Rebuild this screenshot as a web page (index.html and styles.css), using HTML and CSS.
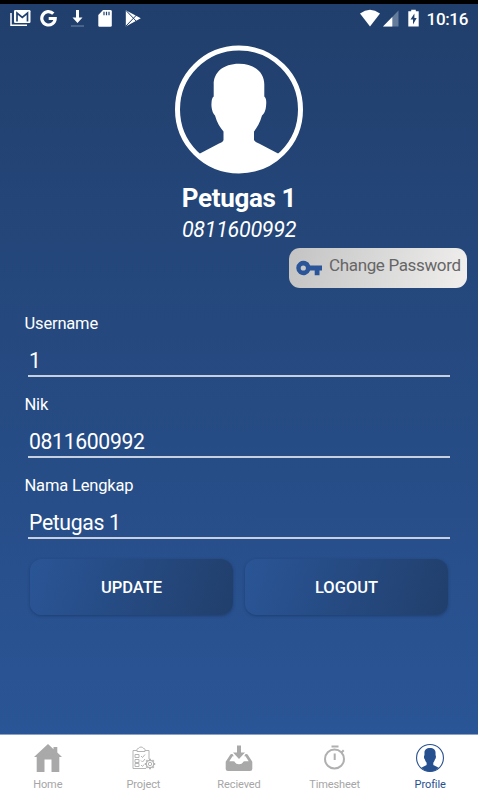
FILE: index.html
```html
<!DOCTYPE html>
<html lang="id">
<head>
<meta charset="utf-8">
<title>Profile</title>
<link rel="stylesheet" href="styles.css">
</head>
<body>
<svg width="0" height="0" class="defs">
  <symbol id="person" viewBox="0 0 128 128">
    <path d="M64 18.300C80 18.300 89.300 27 89.300 39V51Q92 53 91 61Q90.500 67 87 70C85 77 82 82 79 86V94.500Q80 96.500 84 98L104 108.500C94 119 80 126 64 126S34 119 24 108.500L44 98Q48 96.500 48.500 94.500V86C45 82 42 77 40 70Q37 67 36.500 61Q36 53 38.700 51V39C38.700 27 48 18.300 64 18.300Z" fill="currentColor"/>
  </symbol>
</svg>
<div class="screen">
  <header class="status">
    <div class="status-left">
      <svg width="21" height="18" viewBox="0 0 21 18"><path d="M1 4V16.300H17" fill="none" stroke="#fff" stroke-width="1.500"/><rect x="4" y="1" width="16.500" height="13" rx="1.200" fill="#fff"/><path d="M7 12.500V4L12.300 8.500L17.500 4V12.500" fill="none" stroke="#21406e" stroke-width="1.700"/></svg>
      <svg width="17" height="18" viewBox="0 0 17 18"><path d="M13.300 4.600A6.700 6.700 0 1 0 15.200 9.500H8.700" fill="none" stroke="#fff" stroke-width="3.200"/></svg>
      <svg width="14" height="18" viewBox="0 0 14 18"><path d="M5 1H8V8.500H11.500L6.500 14L1.500 8.500H5Z" fill="#fff"/><path d="M0 17H13" stroke="#7188a8" stroke-width="1"/></svg>
      <svg width="14" height="18" viewBox="0 0 14 18"><path d="M5 1H12.300Q13.800 1 13.800 2.200V16.300Q13.800 17.800 12.300 17.800H1.500Q.3 17.800 .3 16.300V6Z" fill="#fff"/><path d="M6 2.800V6.300M8.500 2.800V6.300M11 2.800V6.300" stroke="#21406e" stroke-width="1.200"/></svg>
      <svg width="16" height="18" viewBox="0 0 16 18"><path d="M.8 1.200L15.800 9.300L.8 17.500Z" fill="#fff"/><path d="M1 1.500L12.500 13.500M1 17L12.500 5" stroke="#21406e" stroke-width="1"/></svg>
    </div>
    <div class="status-right">
      <svg width="21" height="18" viewBox="0 0 21 18"><path d="M0 4.500Q10-2.800 20 4.500L10 17.500Z" fill="#fff"/></svg>
      <svg class="signal" width="16" height="18" viewBox="0 0 16 18"><path d="M0 17.500L15.500 1.500V17.500Z" fill="#647b9c"/><path d="M0 17.500L9.300 7.900V17.500Z" fill="#fff"/></svg>
      <svg class="battery" width="11" height="18" viewBox="0 0 11 18"><path d="M3.200.8H7.800V2.300H10.700V17.600H.3V2.300H3.200Z" fill="#fff"/><path d="M6.400 4.500L2.500 10.500H5V15.500L8.700 9H6.400Z" fill="#21406e"/></svg>
      <span class="clock">10:16</span>
    </div>
  </header>
  <main>
    <section class="identity">
      <svg class="avatar" width="128" height="129" viewBox="0 0 128 128"><circle cx="64" cy="64" r="61.500" fill="none" stroke="currentColor" stroke-width="5"/><use href="#person"/></svg>
      <h1>Petugas 1</h1>
      <p>0811600992</p>
    </section>
    <button class="password">
      <svg width="26" height="16" viewBox="0 0 26 16"><path fill-rule="evenodd" d="M14.200 5.500H26V10.500H23.500V15.300H18.700V10.500H14.200A7.200 7.200 0 1 1 14.200 5.500ZM7.300 5.400A2.600 2.600 0 1 0 7.300 10.600A2.600 2.600 0 1 0 7.300 5.400Z" fill="#2a5598"/></svg>
      <span>Change Password</span>
    </button>
    <form>
      <div class="field"><label>Username</label><div class="value">1</div></div>
      <div class="field"><label>Nik</label><div class="value">0811600992</div></div>
      <div class="field"><label>Nama Lengkap</label><div class="value">Petugas 1</div></div>
      <div class="actions"><button type="button">UPDATE</button><button type="button">LOGOUT</button></div>
    </form>
  </main>
  <nav>
    <a><svg width="28" height="28" viewBox="0 0 28 28"><path d="M14 0L19.500 5.200V3H23.300V8.600L28 13H25.300V28H17.500V15.500H10.500V28H2.700V13H0Z" fill="#a9a9a9"/></svg><span>Home</span></a>
    <a><svg width="28" height="28" viewBox="0 0 28 28" fill="none" stroke="#b5b5b5" stroke-width="1"><path d="M8 6.500H4V24.500H17M16 6.500H20V15"/><path d="M8 7.500V5.500Q8 4.500 9.500 4.500Q10 3 12 3T14.500 4.500Q16 4.500 16 5.500V7.500Z"/><path d="M6 10.500H10V13.500H6ZM6 15.500H10V18.500H6ZM6 19.500H10V22.500H6ZM12 12L13.500 13.500L16 10.500M12 16.500L13.500 18L16 15M12 21L13.500 22.500L15 20.500"/><circle cx="21" cy="20" r="3.700" stroke-width="1.300"/><circle cx="21" cy="20" r="1.700"/><path d="M21 14.800V16.200M21 23.800V25.200M15.800 20H17.200M24.800 20H26.200M17.300 16.300L18.300 17.300M23.700 22.700L24.700 23.700M17.300 23.700L18.300 22.700M23.700 17.300L24.700 16.300" stroke-width="2"/></svg><span>Project</span></a>
    <a><svg width="28" height="28" viewBox="0 0 28 28" fill="#a9a9a9"><path d="M12 1.500H16V8.500H20L14 15L8 8.500H12Z"/><path d="M7.500 10L8.800 12.200H7.500L4.300 17.300H8.500Q9.500 17.300 10 18.300Q10.800 20.300 14 20.300T18 18.300Q18.500 17.300 19.500 17.300H23.700L20.500 12.200H19.200L20.500 10H21.500Q22.300 10 22.800 10.800L26.500 16.500Q27.300 17.300 27.300 18.300V25Q27.300 27 25 27H3Q.7 27 .7 25V18.300Q.7 17.300 1.500 16.500L5.200 10.800Q5.700 10 6.500 10Z"/></svg><span>Recieved</span></a>
    <a><svg width="28" height="28" viewBox="0 0 28 28" fill="none" stroke="#b0b0b0" stroke-width="2"><circle cx="13.500" cy="15" r="9.500"/><path d="M10.500 2.500H17.500M13.700 9.500V16M20.500 8.500L22.700 6.300"/></svg><span>Timesheet</span></a>
    <a class="active"><svg width="28" height="28" viewBox="0 0 128 128"><circle cx="64" cy="64" r="61.500" fill="none" stroke="currentColor" stroke-width="5"/><use href="#person"/></svg><span>Profile</span></a>
  </nav>
</div>
</body>
</html>
```
FILE: styles.css
```css
* { box-sizing: border-box; }
body { margin: 0; font-family: Roboto, sans-serif; }
.defs { position: absolute; }
.screen {
  display: flex;
  flex-direction: column;
  height: 800px;
  overflow: hidden;
  border-top: 4px solid #000;
  background: linear-gradient(#213f6c, #2a5596 735px);
  color: #fff;
}
.status { display: flex; justify-content: space-between; height: 30px; padding: 5px 10px 0 10px; flex: none; }
.status-left { display: flex; gap: 13px; }
.status-left svg:first-child { margin-right: -4px; }
.status-left svg:nth-child(3) { margin-left: 1px; }
.status-right { display: flex; }
.signal { margin-left: 2px; }
.battery { margin-left: 9px; }
.clock { margin-left: 8px; font-size: 17px; font-weight: 500; line-height: 21px; letter-spacing: -0.35px; }
main { flex: 1; display: flex; flex-direction: column; padding-top: 11px; }
.identity { display: flex; flex-direction: column; align-items: center; }
.avatar { display: block; }
h1 { margin: 9px 0 0; font-size: 26px; font-weight: 700; line-height: 30px; letter-spacing: -0.35px; }
p { margin: 5px 0 0; font-size: 21.500px; font-style: italic; line-height: 24px; letter-spacing: -0.3px; }
button { font-family: inherit; border: 0; padding: 0; }
.password {
  display: flex;
  align-items: center;
  align-self: flex-end;
  width: 178px;
  height: 40px;
  margin: 6px 11px 0 0;
  padding: 0 0 0 7px;
  gap: 7px;
  border-radius: 11px;
  background: linear-gradient(105deg, #c3c3c3, #f0efee);
  color: #666;
  font-size: 17px;
  letter-spacing: -0.35px;
  white-space: nowrap;
}
.password svg { margin-top: -1px; }
.password span { margin-top: -6px; }
form { padding: 26px 24px 0; }
.field { height: 81px; }
label { display: block; padding-left: 0.5px; font-size: 16.500px; line-height: 20px; letter-spacing: -0.17px; }
.value { height: 33px; margin: 10px 4px 0; padding: 2px 0 0 1px; border-bottom: 2px solid #c6d0e0; font-size: 21.200px; line-height: 30px; letter-spacing: -0.35px; }
.actions { display: flex; gap: 12px; padding: 2px 0 0 6px; }
.actions button {
  width: 203px;
  height: 56px;
  border-radius: 12px;
  background: linear-gradient(105deg, #2a5596, #213f6c);
  box-shadow: 0 1px 3px rgba(20, 45, 85, 0.5);
  color: #fff;
  font-size: 16.500px;
  font-weight: 500;
}
nav { flex: none; display: grid; grid-template-columns: repeat(5, 1fr); height: 66px; border-top: 1px solid #8aa2c4; background: #fff; color: #a6a6a6; }
nav a { display: flex; flex-direction: column; align-items: center; padding-top: 9px; font-size: 11px; line-height: 14px; letter-spacing: -0.1px; }
nav span { margin-top: 6px; }
nav .active { color: #27508f; }
```
